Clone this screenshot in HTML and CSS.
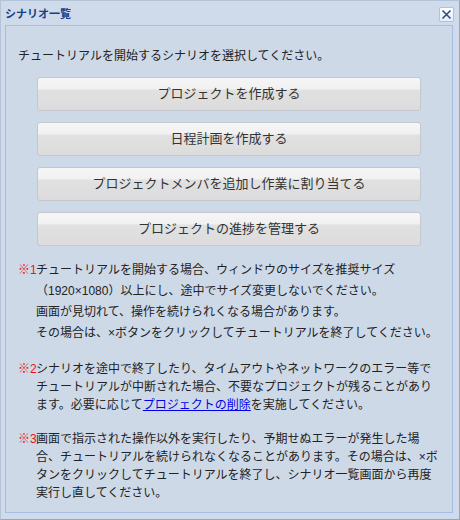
FILE: index.html
```html
<!DOCTYPE html>
<html lang="ja">
<head>
    <meta charset="UTF-8">
    <title>シナリオ一覧</title>
    <link rel="stylesheet" href="styles.css">
</head>
<body>
    <div class="win">
        <div class="win-head">
            <span class="win-title">シナリオ一覧</span>
            <span class="win-close">
                <svg width="11" height="11" viewBox="0 0 11 11">
                    <path d="M1.5 1.5 L9.5 9.5 M9.5 1.5 L1.5 9.5" stroke="#2a4a8a" stroke-width="1.6" fill="none"/>
                </svg>
            </span>
        </div>
        <div class="win-body">
            <p class="intro">チュートリアルを開始するシナリオを選択してください。</p>
            <div class="btns">
                <div class="btn">プロジェクトを作成する</div>
                <div class="btn">日程計画を作成する</div>
                <div class="btn">プロジェクトメンバを追加し作業に割り当てる</div>
                <div class="btn">プロジェクトの進捗を管理する</div>
            </div>
            <!-- 注意事項 -->
            <p class="note note1"><span class="mark">※1</span>チュートリアルを開始する場合、ウィンドウのサイズを推奨サイズ<br>（1920×1080）以上にし、途中でサイズ変更しないでください。<br>画面が見切れて、操作を続けられくなる場合があります。<br>その場合は、×ボタンをクリックしてチュートリアルを終了してください。</p>
            <p class="note"><span class="mark">※2</span>シナリオを途中で終了したり、タイムアウトやネットワークのエラー等でチュートリアルが中断された場合、不要なプロジェクトが残ることがあり<span>ます。必要に応じて</span><a href="#">プロジェクトの削除</a><span>を実施してください。</span></p>
            <p class="note"><span class="mark">※3</span>画面で指示された操作以外を実行したり、予期せぬエラーが発生した場合、チュートリアルを続けられなくなることがあります。その場合は、×ボタンをクリックしてチュートリアルを終了し、シナリオ一覧画面から再度実行し直してください。</p>
        </div>
    </div>
</body>
</html>
```

FILE: styles.css
```css
*{
    padding: 0;
    margin: 0;
    box-sizing: border-box;
}
body{
    font-family: "Liberation Sans", "Noto Sans CJK JP", sans-serif;
    font-size: 12px;
    color: #222;
    background: #fff;
}
/* ウィンドウ全体 */
.win{
    width: 460px;
    height: 520px;
    background-color: #cfdbea;
    border: 1px solid #b4c4d8;
    border-right-color: #9aa6b6;
    border-bottom-color: #9aa6b6;
    display: flex;
    flex-direction: column;
}
/* タイトルバー */
.win-head{
    height: 24px;
    padding: 0 5px 0 4px;
    display: flex;
    align-items: center;
    justify-content: space-between;
}
.win-title{
    color: #15428b;
    font-size: 11px;
    font-weight: bold;
}
.win-close{
    width: 15px;
    height: 15px;
    display: flex;
    align-items: center;
    justify-content: center;
    background: linear-gradient(#ffffff, #e6eef8);
    border: 1px solid #a9c2e6;
    border-radius: 2px;
    margin-top: 2px;
}
/* 本体 */
.win-body{
    margin: 0 6px 6px 4px;
    flex: 1;
    border: 1px solid #a3bde3;
    background-color: #ced9e8;
    padding: 21px 10px 0 12px;
}
.intro{
    line-height: 18px;
}
.btns{
    margin: 12px 0 0 19px;
    display: flex;
    flex-direction: column;
    gap: 11px;
}
.btn{
    width: 384px;
    height: 34px;
    border: 1px solid #c4c8ce;
    border-radius: 3px;
    background: linear-gradient(#f6f6f6 0, #f1f1f1 11px, #e1e1e1 12px, #dcdcdc 100%);
    color: #333;
    font-size: 13px;
    text-align: center;
    line-height: 32px;
    cursor: pointer;
}
/* ※の注意書き */
.note{
    line-height: 18px;
    padding-left: 18px;
    text-indent: -18px;
    margin-top: 16px;
}
.note1{
    line-height: 21px;
    margin-top: 14px;
}
.mark{
    display: inline-block;
    width: 18px;
    text-indent: 0;
    color: #ee1111;
}
.note a{
    color: #0000ee;
}
```
